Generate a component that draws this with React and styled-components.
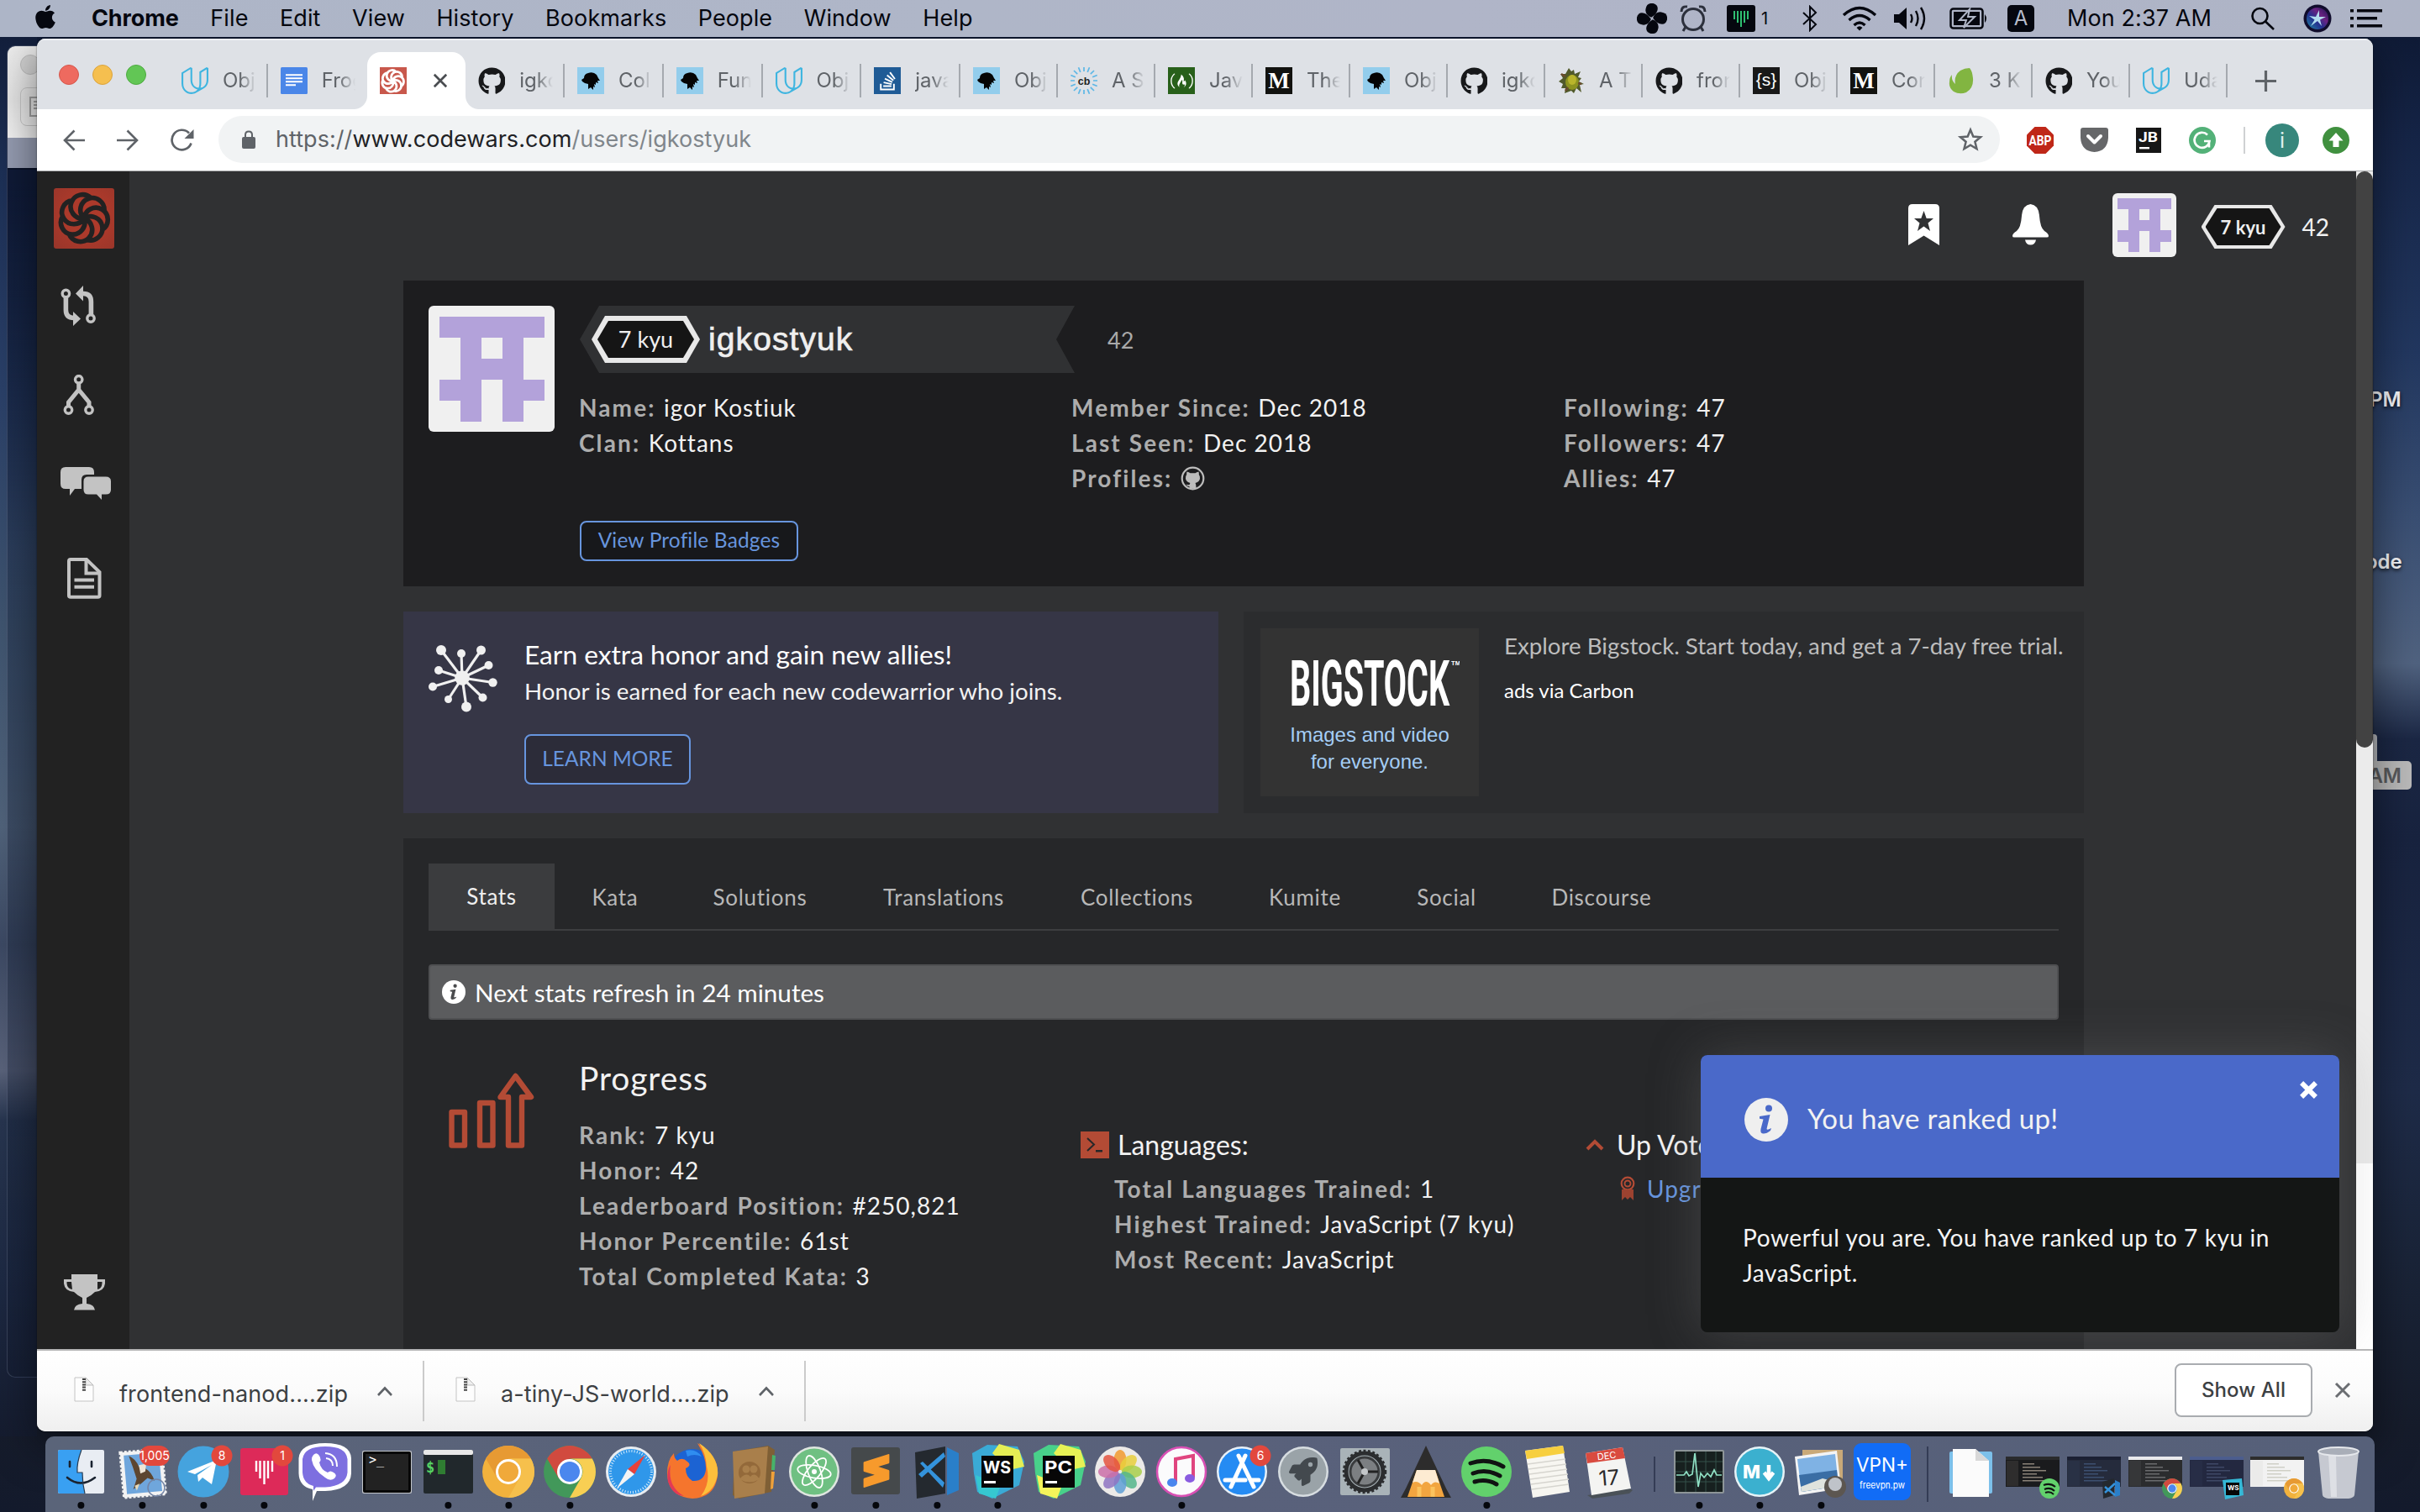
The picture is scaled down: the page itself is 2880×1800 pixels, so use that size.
import React from 'react';
import styled, { createGlobalStyle, css } from 'styled-components';
import { FaApple, FaGithub, FaStackOverflow, FaFreeCodeCamp, FaRocket } from 'react-icons/fa';
import { SiUdacity, SiSublimetext } from 'react-icons/si';

const UI = `Inter, Roboto, "Liberation Sans", sans-serif`;
const LATO = `Lato, "Open Sans", sans-serif`;

const Global = createGlobalStyle`
  * { box-sizing: border-box; }
  html, body { margin: 0; padding: 0; background: #121b31; }
  svg { display: block; flex: none; }
`;

/* ---------- desktop ---------- */
const Desktop = styled.div`
  position: relative;
  width: 2880px;
  height: 1800px;
  overflow: hidden;
  display: flex;
  flex-direction: column;
  font-family: ${UI};
  background:
    linear-gradient(180deg, #0d1730 0, #152446 160px, #22375f 420px, #3a4f73 620px, #50627f 790px,
      #1b2744 880px, #18233f 1000px, #1e2b48 1300px, #1a2438 1500px, #161c2b 1700px, #131a2c 1800px);
`;
const LeftScene = styled.div`
  position: absolute;
  left: 0;
  top: 44px;
  width: 44px;
  height: 1666px;
  background: linear-gradient(180deg, #131f3c 0, #1c2f55 160px, #2a4068 420px, #3f546f 700px,
    #50627a 940px, #3c4963 1080px, #59627a 1230px, #27354f 1290px, #1d2943 1480px, #151c2f 1666px);
`;
const BackWindow = styled.div`
  position: absolute;
  left: 8px;
  top: 54px;
  width: 60px;
  height: 1586px;
  border-radius: 10px;
  border: 1px solid rgba(150, 165, 190, 0.25);
  overflow: hidden;
  background: linear-gradient(180deg, #0f1a36 0, #0f1a36 160px, rgba(18, 30, 56, 0.35) 600px, rgba(18, 26, 46, 0.3) 1586px);
`;
const BackTitle = styled.div`
  height: 109px;
  padding: 10px 0 0 15px;
  background: linear-gradient(180deg, #ececec, #e4e4e4 60%, #f2f2f2);
`;
const BackDot = styled.div`
  width: 24px;
  height: 24px;
  border-radius: 50%;
  background: #d2d2d2;
  border: 1px solid #bdbdbd;
`;
const BackButton = styled.div`
  width: 60px;
  height: 46px;
  margin-top: 15px;
  border: 1px solid #c6c6c6;
  border-radius: 8px;
  padding: 10px;
`;
const BackPane = styled.div`
  height: 38px;
  background: #949bb0;
  border-bottom: 2px solid #0a1228;
`;
const DesktopLabel = styled.span`
  position: absolute;
  left: ${p => p.$x}px;
  top: ${p => p.$y}px;
  font: 600 24px/30px ${UI};
  color: #f1f3f6;
  text-shadow: 0 2px 4px rgba(0, 0, 0, 0.8);
`;
const SelectedLabel = styled.span`
  position: absolute;
  left: 2790px;
  top: 906px;
  width: 80px;
  height: 34px;
  padding-right: 12px;
  border-radius: 5px;
  background: #b9b9b9;
  text-align: right;
  font: 600 24px/36px ${UI};
  color: #58595c;
`;
const FolderStub = styled.div`
  position: absolute;
  left: 2790px;
  top: 874px;
  width: 39px;
  height: 40px;
  border-radius: 4px;
  background: #b2b4b8;
`;

/* ---------- menu bar ---------- */
const MenuBar = styled.header`
  position: relative;
  display: flex;
  align-items: center;
  height: 44px;
  flex: none;
  padding: 0 45px 0 38px;
  background: linear-gradient(90deg, #adb5c7, #afb6c8 40%, #b0b5c8 60%, #aeb4c6);
  color: #05070f;
`;
const AppleMark = styled.div`
  margin-top: -4px;
`;
const MenuList = styled.nav`
  display: flex;
  gap: 37.5px;
  margin-left: 39px;
  flex: 1;
  font-size: 27px;
  line-height: 44px;
`;
const MenuItem = styled.span`
  font-weight: ${p => (p.$bold ? 700 : 400)};
  letter-spacing: ${p => (p.$bold ? '-0.1px' : '0.1px')};
`;
const Tray = styled.div`
  display: flex;
  align-items: center;
  height: 44px;
`;
const TrayItem = styled.div`
  width: ${p => p.$w}px;
  margin-left: ${p => p.$gap || 0}px;
  display: flex;
  align-items: center;
  justify-content: center;
  white-space: nowrap;
`;
const Clock = styled.span`
  font: 400 27px/44px ${UI};
  letter-spacing: 0.1px;
`;
const SmallCount = styled.span`
  font: 400 20px/44px ${UI};
`;
const InputSource = styled.div`
  width: 32px;
  height: 32px;
  border-radius: 5px;
  background: #05070f;
  color: #b7bccb;
  text-align: center;
  font: 400 24px/32px ${UI};
`;

/* ---------- browser window ---------- */
const Window = styled.section`
  position: relative;
  width: 2780px;
  height: 1658px;
  margin: 2px 0 0 44px;
  flex: none;
  display: flex;
  flex-direction: column;
  border-radius: 10px;
  overflow: hidden;
  background: #fff;
`;
const WindowShadow = styled.div`
  position: absolute;
  left: 44px;
  top: 46px;
  width: 2780px;
  height: 1658px;
  border-radius: 10px;
  box-shadow: 0 16px 50px rgba(0, 0, 0, 0.5), 0 0 2px rgba(0, 0, 0, 0.6);
`;
const TabStrip = styled.div`
  display: flex;
  align-items: flex-end;
  height: 84px;
  flex: none;
  background: #dee1e6;
  border-top: 2px solid #eceef2;
`;
const Lights = styled.div`
  display: flex;
  gap: 16px;
  width: 157px;
  height: 82px;
  padding: 29px 0 0 26px;
`;
const Light = styled.i`
  width: 24px;
  height: 24px;
  border-radius: 50%;
  background: ${p => p.$c};
  border: 1px solid ${p => p.$b};
`;
const Tab = styled.div`
  position: relative;
  display: flex;
  align-items: center;
  width: ${p => p.$w}px;
  height: 68px;
  padding-left: 15px;
  flex: none;
  ${p => p.$active && css`
    background: #fff;
    border-radius: 16px 16px 0 0;
    &::before, &::after {
      content: '';
      position: absolute;
      bottom: 0;
      width: 16px;
      height: 16px;
    }
    &::before {
      left: -16px;
      background: radial-gradient(circle at 0 0, transparent 15.5px, #fff 16.5px);
    }
    &::after {
      right: -16px;
      background: radial-gradient(circle at 100% 0, transparent 15.5px, #fff 16.5px);
    }
  `}
`;
const TabLabel = styled.span`
  width: 40px;
  margin-left: 17px;
  overflow: hidden;
  white-space: nowrap;
  font: 400 24px/32px ${UI};
  color: #5f6368;
  mask-image: linear-gradient(90deg, #000 50%, transparent 100%);
`;
const TabRule = styled.i`
  width: 2px;
  height: 40px;
  margin-left: auto;
  background: #a5a9af;
`;
const CloseMark = styled.div`
  margin-left: 31px;
`;
const NewTab = styled.div`
  margin: 0 0 21px 33px;
`;
const Favicon = styled.div`
  width: 32px;
  height: 32px;
  flex: none;
  display: flex;
  align-items: center;
  justify-content: center;
  overflow: hidden;
  background: ${p => p.$bg || 'transparent'};
  color: ${p => p.$fg || '#fff'};
`;
const Toolbar = styled.div`
  display: flex;
  align-items: center;
  height: 74px;
  flex: none;
  padding: 0 28px 0 31px;
  background: #fff;
  border-bottom: 1px solid #a9aaac;
`;
const ToolIcon = styled.div`
  width: ${p => p.$w}px;
  margin-left: ${p => p.$gap || 0}px;
  display: flex;
  justify-content: center;
`;
const Omnibox = styled.div`
  display: flex;
  align-items: center;
  width: 2122px;
  height: 56px;
  margin: -2px 0 0 30px;
  padding: 0 19px 0 28px;
  border-radius: 28px;
  background: #f1f3f4;
`;
const Url = styled.div`
  flex: 1;
  margin-left: 24px;
  font: 400 27px/58px ${UI};
  letter-spacing: 0.05px;
  color: #80868b;
  em { font-style: normal; color: #5f6368; }
  b { font-weight: 400; color: #202124; }
`;
const ToolRule = styled.i`
  width: 2px;
  height: 32px;
  margin-left: 33px;
  background: #cfd1d3;
`;
const Avatar = styled.div`
  width: 40px;
  height: 40px;
  margin-left: 24px;
  border-radius: 50%;
  background: #37877c;
  color: #dff0ee;
  text-align: center;
  font: 400 25px/40px ${UI};
`;

/* ---------- page ---------- */
const Page = styled.div`
  position: relative;
  display: flex;
  height: 1402px;
  flex: none;
  overflow: hidden;
  background: #303133;
  font-family: ${LATO};
  color: #f2f2f2;
`;
const SideNav = styled.aside`
  width: 110px;
  flex: none;
  display: flex;
  flex-direction: column;
  padding: 20px 0 48px 20px;
  background: #222222;
  color: #c3c3c3;
`;
const Logo = styled.div`
  width: 72px;
  height: 72px;
  border-radius: 3px;
  background: radial-gradient(circle at 55% 45%, #ad3a2b 40%, #98352a 100%);
  color: #222222;
`;
const NavIcon = styled.div`
  margin: ${p => p.$top}px 0 0 ${p => p.$left}px;
`;
const Main = styled.main`
  width: 2650px;
  flex: none;
`;
const PageHeader = styled.div`
  display: flex;
  justify-content: flex-end;
  height: 130px;
  padding-right: 32px;
`;
const HeaderItem = styled.div`
  margin: ${p => p.$top}px 0 0 ${p => p.$gap || 0}px;
`;
const HonorText = styled.span`
  display: block;
  font-size: 28px;
  line-height: 42px;
`;
const Identicon = styled.div`
  width: ${p => p.$size}px;
  height: ${p => p.$size}px;
  flex: none;
  display: grid;
  grid-template-columns: repeat(5, 1fr);
  grid-template-rows: repeat(5, 1fr);
  padding: ${p => p.$size / 12}px;
  border-radius: 6px;
  background: #f0f0f0;
`;
const Pixel = styled.i`
  margin: ${p => (p.$on ? '0 -0.5px -0.5px 0' : '0')};
  background: ${p => (p.$on ? '#b3a2da' : 'transparent')};
`;
const RankOuter = styled.div`
  width: ${p => p.$w}px;
  height: ${p => p.$h}px;
  padding: ${p => p.$b}px ${p => p.$b + 1}px;
  background: #e8e8e8;
  clip-path: polygon(${p => p.$s}px 0, calc(100% - ${p => p.$s}px) 0, 100% 50%, calc(100% - ${p => p.$s}px) 100%, ${p => p.$s}px 100%, 0 50%);
`;
const RankInner = styled.div`
  height: 100%;
  display: flex;
  align-items: center;
  justify-content: center;
  background: #151515;
  color: #efefef;
  font: ${p => (p.$bold ? 700 : 400)} ${p => p.$fs}px/1.5 ${LATO};
  clip-path: polygon(${p => p.$s}px 0, calc(100% - ${p => p.$s}px) 0, 100% 50%, calc(100% - ${p => p.$s}px) 100%, ${p => p.$s}px 100%, 0 50%);
`;
const Column = styled.div`
  width: 2000px;
  margin-left: 326px;
  display: flex;
  flex-direction: column;
  gap: 30px;
`;
const ProfileCard = styled.section`
  display: flex;
  gap: 30px;
  height: 364px;
  padding: 30px;
  background: #1d1d1f;
`;
const ProfileBody = styled.div`
  flex: 1;
`;
const NameRow = styled.div`
  display: flex;
  align-items: center;
  height: 80px;
  width: 700px;
`;
const Ribbon = styled.div`
  display: flex;
  align-items: center;
  width: 589px;
  height: 80px;
  padding-left: 14px;
  background: #303133;
  clip-path: polygon(0 50%, 23px 0, 100% 0, calc(100% - 22px) 50%, 100% 100%, 23px 100%);
`;
const UserName = styled.span`
  margin-left: 10px;
  font: 400 39px/80px "Liberation Sans", Arial, sans-serif;
  letter-spacing: 1.1px;
  -webkit-text-stroke: 0.7px #efefef;
  color: #efefef;
`;
const Score = styled.span`
  margin-left: 39px;
  font-size: 27px;
  color: #a9a9a9;
`;
const InfoGrid = styled.div`
  display: grid;
  grid-template-columns: repeat(3, 586px);
  height: 126px;
  margin: 20px 0 0 -1px;
`;
const Fact = styled.div`
  display: flex;
  align-items: center;
  height: 42px;
  font-size: 28px;
  line-height: 42px;
  white-space: nowrap;
  letter-spacing: 1px;
`;
const FactLabel = styled.b`
  margin-right: 9.5px;
  font-weight: 700;
  letter-spacing: 2.1px;
  color: #adadad;
`;
const OutlineButton = styled.button`
  display: block;
  width: ${p => p.$w}px;
  height: ${p => p.$h}px;
  margin: ${p => p.$top}px 0 0;
  padding: 0 0 2px;
  border: 2px solid #6795de;
  border-radius: 8px;
  background: ${p => p.$bg};
  color: #6795de;
  font: 400 ${p => p.$fs}px/1 ${LATO};
  letter-spacing: ${p => p.$ls}px;
  white-space: nowrap;
`;
const PromoRow = styled.div`
  display: flex;
  gap: 30px;
  height: 240px;
`;
const Promo = styled.section`
  display: flex;
  width: 970px;
  flex: none;
  padding: 32px 30px;
  background: #363646;
`;
const PromoIcon = styled.div`
  margin-top: 8px;
`;
const PromoText = styled.div`
  margin-left: 31px;
  white-space: nowrap;
`;
const PromoTitle = styled.div`
  margin-top: -2px;
  font-size: 31.7px;
  line-height: 42px;
  color: #fff;
`;
const PromoSub = styled.div`
  margin-top: 2px;
  font-size: 27.7px;
  line-height: 42px;
`;
const AdCard = styled.section`
  display: flex;
  flex: 1;
  min-width: 0;
  padding: 20px;
  gap: 30px;
  background: #2b2c2e;
`;
const AdImage = styled.div`
  width: 260px;
  height: 200px;
  flex: none;
  display: flex;
  flex-direction: column;
  align-items: center;
  padding-top: 36px;
  background: #333333;
  color: #a4cdf5;
  text-align: center;
  font: 400 24px/32px "Liberation Sans", Arial, sans-serif;
`;
const AdTagline = styled.div`
  margin-top: 15px;
  white-space: nowrap;
`;
const AdCopy = styled.div`
  white-space: nowrap;
  font-size: 27.7px;
  line-height: 42px;
  color: #bdbdbd;
`;
const AdVia = styled.div`
  margin-top: 11px;
  font-size: 24px;
  line-height: 42px;
  color: #fff;
`;
const StatsCard = styled.section`
  height: 640px;
  padding: 30px;
  background: #262729;
`;
const TabsRow = styled.div`
  display: flex;
  height: 80px;
  border-bottom: 2px solid #3d3e40;
`;
const PageTab = styled.div`
  height: ${p => (p.$active ? 80 : 78)}px;
  padding: ${p => (p.$active ? 0 : 1)}px 0 0;
  width: ${p => p.$w}px;
  text-align: center;
  font-size: 26px;
  line-height: 78px;
  letter-spacing: 0.7px;
  background: ${p => (p.$active ? '#3b3c3e' : 'transparent')};
  color: ${p => (p.$active ? '#efefef' : '#b8b8b8')};
`;
const Notice = styled.div`
  display: flex;
  align-items: center;
  height: 66px;
  margin-top: 40px;
  padding-left: 14px;
  border: 2px solid #4f5052;
  border-radius: 4px;
  background: #5b5c5e;
  color: #fff;
  font-size: 29.7px;
`;
const NoticeText = styled.span`
  margin-left: 11px;
`;
const StatsBody = styled.div`
  display: flex;
  padding-top: 34px;
`;
const StatsIcon = styled.div`
  width: 179px;
  padding: 28px 0 0 24px;
`;
const StatsTitle = styled.h2`
  height: 70px;
  margin: 0 0 12px;
  font-weight: 400;
  font-size: 39px;
  line-height: 70px;
  letter-spacing: 0.9px;
`;
const StatsColumn = styled.div`
  width: ${p => p.$w}px;
  padding-top: ${p => p.$top || 0}px;
`;
const SubHead = styled.div`
  display: flex;
  align-items: center;
  height: 50px;
  margin-left: ${p => p.$left}px;
  font-size: 32px;
  line-height: 50px;
  white-space: nowrap;
`;
const SubHeadText = styled.span`
  margin-left: ${p => p.$gap}px;
`;
const Indented = styled.div`
  margin: 6px 0 0 51px;
`;
const LinkText = styled.span`
  margin-left: 14px;
  color: #6795de;
`;
const ScrollTrack = styled.div`
  width: 20px;
  flex: none;
  background: linear-gradient(180deg, #ebebeb 1181px, #ffffff 1181px);
`;
const ScrollThumb = styled.div`
  width: 20px;
  height: 686px;
  border-radius: 10px;
  background: #424242;
  border-right: 1px solid #383838;
`;
const Toast = styled.div`
  position: absolute;
  left: 1980px;
  top: 1052px;
  width: 760px;
  height: 330px;
  border-radius: 8px;
  overflow: hidden;
  background: #141615;
`;
const ToastGlow = styled.div`
  position: absolute;
  left: 1980px;
  top: 1052px;
  width: 760px;
  height: 330px;
  border-radius: 8px;
  box-shadow: 0 0 60px rgba(120, 120, 120, 0.34);
`;
const ToastHead = styled.div`
  display: flex;
  height: 146px;
  padding: 0 26px 0 52px;
  background: #4a69c9;
`;
const ToastTitle = styled.div`
  flex: 1;
  margin: 50px 0 0 23px;
  font-size: 33px;
  line-height: 50px;
  letter-spacing: 0.35px;
`;
const ToastBadge = styled.div`
  margin-top: 51px;
`;
const ToastClose = styled.div`
  margin-top: 31px;
`;
const ToastBody = styled.div`
  padding: 50px 40px 0 50px;
  font-size: 28px;
  line-height: 42px;
  letter-spacing: 0.6px;
  color: #f5f5f5;
`;

/* ---------- downloads ---------- */
const Downloads = styled.footer`
  display: flex;
  align-items: center;
  height: 98px;
  padding: 0 26px 0 0;
  border-top: 2px solid #b5b5b6;
  background: linear-gradient(180deg, #ffffff, #fbfbfb 50%, #efefef);
  color: #3c4043;
`;
const Download = styled.div`
  display: flex;
  align-items: center;
  width: ${p => p.$w}px;
  height: 72px;
  padding: 0 36px 0 ${p => p.$pl}px;
  border-right: 2px solid #cbcbcb;
  svg:first-child { margin-top: -4px; }
`;
const FileName = styled.span`
  flex: 1;
  margin: 7px 0 0 30px;
  white-space: nowrap;
  font: 400 27px/36px ${UI};
  letter-spacing: 0.1px;
`;
const ShowAll = styled.button`
  width: 164px;
  height: 64px;
  margin: -3px 26px 0 auto;
  padding: 0;
  border: 2px solid #a9acb0;
  border-radius: 8px;
  background: #fff;
  color: #3c4043;
  font: 500 24px/1 ${UI};
  letter-spacing: 0.1px;
`;
const ShelfClose = styled.div`
  margin-top: -3px;
`;

/* ---------- dock ---------- */
const DockBar = styled.div`
  position: relative;
  display: flex;
  width: 2772px;
  height: 90px;
  margin: 6px 0 0 54px;
  padding-left: 6px;
  flex: none;
  border-radius: 10px 10px 0 0;
  background: linear-gradient(90deg, #5a6479, #59617b 50%, #566079);
`;
const DockCell = styled.div`
  width: 72.75px;
  height: 90px;
  flex: none;
`;
const DockRule = styled.i`
  width: 2px;
  height: ${p => p.$h}px;
  margin: ${p => p.$top}px 16px 0;
  background: #343c55;
`;

/* ---------- drawings ---------- */
const pattern = ['11111', '01010', '01110', '11011', '01010'];
function Ident({ size }) {
  return (
    <Identicon $size={size}>
      {pattern.join('').split('').map((c, i) => <Pixel key={i} $on={c === '1'} />)}
    </Identicon>
  );
}
function Rank({ large }) {
  return large ? (
    <RankOuter $w={129} $h={56} $b={6} $s={16}>
      <RankInner $s={13} $fs={27}>7 kyu</RankInner>
    </RankOuter>
  ) : (
    <RankOuter $w={100} $h={52} $b={4} $s={16}>
      <RankInner $s={14} $fs={22} $bold>7 kyu</RankInner>
    </RankOuter>
  );
}

/* seven arcs leave the centre, swing clockwise and close on the neighbouring arc */
const Swirl = ({ size, width, r = 14.2 }) => {
  const step = (Math.PI * 2) / 7;
  const arms = Array.from({ length: 7 }, (_, k) => {
    const a = 0.1 + k * step;
    const reach = 2 * r * Math.cos(step / 2);
    const x = 36 + reach * Math.cos(a + step / 2);
    const y = 36 + reach * Math.sin(a + step / 2);
    return `M36 36A${r} ${r} 0 1 1 ${x.toFixed(2)} ${y.toFixed(2)}`;
  });
  return (
    <svg width={size} height={size} viewBox="0 0 72 72" fill="none" stroke="currentColor" strokeWidth={width}>
      <path d={arms.join('')} />
    </svg>
  );
};
const Bird = () => (
  <svg width="32" height="32" viewBox="0 0 32 32">
    <path d="M5 15 L8 13 Q8 8 13 7 Q19 5 23 9 L25 13 L27 16 L24 16 L25 19 L22 18 L22 21 L20 20 L21 24 L19 23 L19 27 L16 24 L13 26 L13 20 L9 19 L6 17 Z" fill="#050505" />
  </svg>
);
const Burst = () => (
  <svg width="32" height="32" viewBox="0 0 32 32" stroke="#5db7e6" strokeWidth="1.7">
    {Array.from({ length: 16 }, (_, i) => (
      <line key={i} x1="16" y1="-1" x2="16" y2="5" transform={`rotate(${i * 22.5} 16 16)`} />
    ))}
    <text x="16" y="20.5" textAnchor="middle" fontFamily="Liberation Sans" fontWeight="700" fontSize="12.5" fill="#222" stroke="none">cb</text>
  </svg>
);
const Turtle = () => (
  <svg width="32" height="32" viewBox="0 0 32 32">
    <path d="M13 1 L16 5 L19 3 L20 8 L27 5 L24 12 L28 13 L25 17 L31 20 L26 21 L28 30 L22 25 L19 31 L16 28 L8 31 L9 25 L4 25 L6 20 L1 17 L6 13 L3 8 L9 8 Z" fill="#515a2a" />
    <ellipse cx="17" cy="18" rx="8" ry="9" fill="#8d931f" />
    <ellipse cx="17" cy="15" rx="5" ry="6" fill="#b9b52b" />
    <path d="M4 8L9 11M28 20L24 19M9 28L12 24" stroke="#6d4b2e" strokeWidth="2.5" />
  </svg>
);
const Leaf = () => (
  <svg width="32" height="32" viewBox="0 0 32 32">
    <path d="M26 1 Q29 4 30 13 Q31 25 22 30 Q14 33 7 29 Q1 24 2 18 Q2 12 5 9 Q4 16 9 20 Q7 10 15 4 Q20 1 26 1Z" fill="#82b541" />
  </svg>
);
const Docs = () => (
  <svg width="32" height="32" viewBox="0 0 32 32">
    <rect width="32" height="32" rx="1.5" fill="#4a86e8" />
    <path d="M6 9.2H26M6 13.2H26M6 17.2H26M6 21.2H18" stroke="#fff" strokeWidth="2" />
  </svg>
);
const Lettermark = ({ ch, family, size, weight = 700, y = 24 }) => (
  <svg width="32" height="32" viewBox="0 0 32 32">
    <text x="16" y={y} textAnchor="middle" fontFamily={family} fontWeight={weight} fontSize={size} fill="#fff">{ch}</text>
  </svg>
);
const icons = {
  udacity: <Favicon $fg="#3fb5e0"><SiUdacity size={32} /></Favicon>,
  docs: <Favicon><Docs /></Favicon>,
  codewars: <Favicon $bg="#c8584c"><Swirl size={33} width={6} /></Favicon>,
  github: <Favicon $fg="#17181a"><FaGithub size={33} /></Favicon>,
  bird: <Favicon $bg="#93cdec"><Bird /></Favicon>,
  stack: <Favicon $bg="#1f5b96"><FaStackOverflow size={25} /></Favicon>,
  burst: <Favicon><Burst /></Favicon>,
  fcc: <Favicon $bg="#28601a"><FaFreeCodeCamp size={27} /></Favicon>,
  medium: <Favicon $bg="#12120f"><Lettermark ch="M" family="Liberation Serif" size="27" y={25} /></Favicon>,
  turtle: <Favicon><Turtle /></Favicon>,
  scss: <Favicon $bg="#191919"><Lettermark ch="{s}" family="Liberation Sans" size="21" weight={400} y={22} /></Favicon>,
  leaf: <Favicon><Leaf /></Favicon>,
};
const tabs = [
  ['udacity', 'Obj', 117.75, true], ['docs', 'Frog', 117.75, false], ['codewars', null, 117.75, false],
  ['github', 'igko', 117.75, true], ['bird', 'Col', 117.75, true], ['bird', 'Fun', 117.75, true],
  ['udacity', 'Obj', 117.75, true], ['stack', 'java', 117.75, true],
  ['bird', 'Obj', 116, true], ['burst', 'A S', 116, true], ['fcc', 'Jav', 116, true],
  ['medium', 'The', 116, true], ['bird', 'Obj', 116, true], ['github', 'igko', 116, true],
  ['turtle', 'A T', 116, true], ['github', 'fron', 116, true], ['scss', 'Obj', 116, true],
  ['medium', 'Con', 116, true], ['leaf', '3 K', 116, true], ['github', 'You', 116, true],
  ['udacity', 'Uda', 116, true],
];

const InfoGlyph = ({ size, bg, fg }) => (
  <svg width={size} height={size} viewBox="0 0 52 52">
    <circle cx="26" cy="26" r="26" fill={bg} />
    <ellipse cx="29" cy="12.5" rx="4" ry="4" fill={fg} />
    <path d="M18 22 L30.5 20 L26.5 37 Q27 39 32 36 L31 39 Q26 43 22 42.5 Q18.500 42 19.500 37 L22.500 25.500 L18 24.800 Z" fill={fg} />
  </svg>
);
const Cross = ({ size, w, color }) => (
  <svg width={size} height={size} viewBox="0 0 20 20">
    <path d="M2 2L18 18M18 2L2 18" stroke={color} strokeWidth={w} strokeLinecap="butt" />
  </svg>
);

function MenuTray() {
  return (
    <Tray>
      <TrayItem $w={36}>
        <svg width="36" height="36" viewBox="0 0 36 36" fill="#05070f">
          {[0, 90, 180, 270].map(a => (
            <path key={a} d="M17 17 Q9 15 9 8 Q9 0 17 0 Q24 1 23 8 Q22 13 17 17Z" transform={`rotate(${a + 8} 18 18)`} />
          ))}
        </svg>
      </TrayItem>
      <TrayItem $w={32} $gap={15}>
        <svg width="32" height="34" viewBox="0 0 32 34" fill="none" stroke="#2c303c" strokeWidth="3">
          <circle cx="16" cy="18" r="12.5" />
          <path d="M2 9Q2 2 9 3M30 9Q30 2 23 3M7 27L4 32M25 27L28 32" />
        </svg>
      </TrayItem>
      <TrayItem $w={34} $gap={24}>
        <svg width="34" height="32" viewBox="0 0 34 32">
          <rect width="34" height="32" rx="3" fill="#05070f" />
          <path d="M9 7V17M13 7V21M17 7V26M21 7V21M25 7V17" stroke="#2fbf71" strokeWidth="2" />
        </svg>
      </TrayItem>
      <TrayItem $w={8} $gap={7}><SmallCount>1</SmallCount></TrayItem>
      <TrayItem $w={18} $gap={41}>
        <svg width="20" height="32" viewBox="0 0 20 32" fill="none" stroke="#05070f" strokeWidth="2">
          <path d="M2 9L17 23L10 30V2L17 9L2 23" />
        </svg>
      </TrayItem>
      <TrayItem $w={41} $gap={29}>
        <svg width="42" height="30" viewBox="0 0 42 30" fill="none" stroke="#05070f" strokeWidth="3.4">
          <path d="M2 11Q21 -6 40 11M8.500 17Q21 6 33.500 17M14.500 23Q21 17 27.500 23" />
          <path d="M17.500 26Q21 22.500 24.500 26L21 29.500Z" fill="#05070f" stroke="none" />
        </svg>
      </TrayItem>
      <TrayItem $w={42} $gap={20}>
        <svg width="42" height="32" viewBox="0 0 42 32" fill="none" stroke="#05070f" strokeWidth="2.4">
          <path d="M1 11H7L16 3V29L7 21H1Z" fill="#05070f" stroke="none" />
          <path d="M21 11Q24 16 21 21M27 7Q32 16 27 25M33 3Q41 16 33 29" />
        </svg>
      </TrayItem>
      <TrayItem $w={45} $gap={25}>
        <svg width="46" height="26" viewBox="0 0 46 26">
          <rect x="1.500" y="1.500" width="38" height="23" rx="3" fill="none" stroke="#05070f" strokeWidth="2.500" />
          <rect x="5" y="5" width="31" height="16" fill="#05070f" />
          <path d="M24 2L12 15H20L17 24L30 11H22Z" fill="#05070f" stroke="#b0b6c7" strokeWidth="2" />
          <path d="M42 8Q46 13 42 18Z" fill="#05070f" />
        </svg>
      </TrayItem>
      <TrayItem $w={32} $gap={24}><InputSource>A</InputSource></TrayItem>
      <TrayItem $w={170} $gap={40}><Clock>Mon 2:37 AM</Clock></TrayItem>
      <TrayItem $w={30} $gap={47}>
        <svg width="30" height="28" viewBox="0 0 30 28" fill="none" stroke="#05070f" strokeWidth="2.600">
          <circle cx="11.500" cy="11" r="9" /><path d="M18 17.500L28 27" />
        </svg>
      </TrayItem>
      <TrayItem $w={34} $gap={33}>
        <svg width="34" height="34" viewBox="0 0 34 34">
          <defs>
            <linearGradient id="siri" x1="1" y1="0" x2="0" y2="1">
              <stop offset="0" stopColor="#1b1560" /><stop offset="0.350" stopColor="#8a2b9e" />
              <stop offset="0.600" stopColor="#2a3bb0" /><stop offset="1" stopColor="#22b5c9" />
            </linearGradient>
          </defs>
          <circle cx="17" cy="17" r="16.500" fill="#100c2c" />
          <circle cx="17" cy="17" r="13" fill="url(#siri)" opacity="0.750" />
          <path d="M19 7L19 15L27 15L20 18.500L22 26L17 20L9 26L13.500 18.500L7 14L15 15Z" fill="#bfeefa" opacity="0.900" />
        </svg>
      </TrayItem>
      <TrayItem $w={38} $gap={22}>
        <svg width="38" height="22" viewBox="0 0 38 22" fill="#05070f">
          <path d="M0 0H4V3.600H0ZM8 0H38V3.600H8ZM0 9H4V12.600H0ZM8 9H32V12.600H8ZM0 18H4V21.600H0ZM8 18H38V21.600H8Z" />
        </svg>
      </TrayItem>
    </Tray>
  );
}

function BrowserToolbar() {
  return (
    <Toolbar>
      <ToolIcon $w={26}>
        <svg width="26" height="26" viewBox="0 0 26 26" fill="none" stroke="#5f6368" strokeWidth="2.600">
          <path d="M26 13H2M13.500 1.500L2 13L13.500 24.500" />
        </svg>
      </ToolIcon>
      <ToolIcon $w={26} $gap={38}>
        <svg width="26" height="26" viewBox="0 0 26 26" fill="none" stroke="#5f6368" strokeWidth="2.600">
          <path d="M0 13H24M12.500 1.500L24 13L12.500 24.500" />
        </svg>
      </ToolIcon>
      <ToolIcon $w={27} $gap={38}>
        <svg width="28" height="28" viewBox="0 0 28 28">
          <path d="M24.500 17.500A11.800 11.800 0 1 1 22 5.500" fill="none" stroke="#5f6368" strokeWidth="2.700" />
          <path d="M27.500 1V12H16.500Z" fill="#5f6368" />
        </svg>
      </ToolIcon>
      <Omnibox>
        <svg width="16" height="22" viewBox="0 0 16 22">
          <rect y="8" width="16" height="14" rx="2" fill="#5f6368" />
          <path d="M4 9V5.500Q4 1.500 8 1.500Q12 1.500 12 5.500V9" fill="none" stroke="#5f6368" strokeWidth="2" />
        </svg>
        <Url><em>https://</em><b>www.codewars.com</b>/users/igkostyuk</Url>
        <svg width="32" height="30" viewBox="0 0 32 30" fill="none" stroke="#5f6368" strokeWidth="2.500">
          <path d="M16 3.500L19.300 11.500L28 12.200L21.400 17.800L23.500 26.200L16 21.700L8.500 26.200L10.600 17.800L4 12.200L12.700 11.500Z" />
        </svg>
      </Omnibox>
      <ToolIcon $w={32} $gap={32}>
        <svg width="32" height="32" viewBox="0 0 32 32">
          <path d="M9.500 0H22.500L32 9.500V22.500L22.500 32H9.500L0 22.500V9.500Z" fill="#bf2718" />
          <text x="2.500" y="22" fontFamily="Roboto" fontWeight="700" fontSize="16.500" textLength="27" lengthAdjust="spacingAndGlyphs" fill="#fff">ABP</text>
        </svg>
      </ToolIcon>
      <ToolIcon $w={33} $gap={32}>
        <svg width="33" height="29" viewBox="0 0 33 29">
          <path d="M3 0H30Q33 0 33 3V12Q32 28 16.500 29Q1 28 0 12V3Q0 0 3 0Z" fill="#666769" />
          <path d="M9 10L16.500 17.500L24 10" fill="none" stroke="#fff" strokeWidth="4" strokeLinecap="round" strokeLinejoin="round" />
        </svg>
      </ToolIcon>
      <ToolIcon $w={30} $gap={33}>
        <svg width="30" height="30" viewBox="0 0 30 30">
          <rect width="30" height="30" fill="#161616" />
          <text x="3" y="17" fontFamily="Roboto" fontWeight="700" fontSize="17" textLength="23" lengthAdjust="spacingAndGlyphs" fill="#fff">JB</text>
          <rect x="4" y="23" width="12" height="2.400" fill="#fff" />
        </svg>
      </ToolIcon>
      <ToolIcon $w={32} $gap={33}>
        <svg width="32" height="32" viewBox="0 0 32 32">
          <circle cx="16" cy="16" r="16" fill="#53b178" />
          <path d="M22 9.500A9 9 0 1 0 24.500 17H18M24 16V24.500" fill="none" stroke="#fff" strokeWidth="2.600" />
        </svg>
      </ToolIcon>
      <ToolRule />
      <Avatar>i</Avatar>
      <ToolIcon $w={32} $gap={28}>
        <svg width="32" height="32" viewBox="0 0 32 32">
          <circle cx="16" cy="16" r="16" fill="#40903f" />
          <path d="M16 7L24.500 16.500H19.500V24H12.500V16.500H7.500Z" fill="#fff" />
        </svg>
      </ToolIcon>
    </Toolbar>
  );
}

function Sidebar() {
  return (
    <SideNav>
      <Logo><Swirl size={72} width={5.6} /></Logo>
      <NavIcon $top={44} $left={8}>
        <svg width="42" height="48" viewBox="0 0 42 48" fill="none" stroke="currentColor" strokeWidth="3.400">
          <circle cx="6.400" cy="9.500" r="4.200" /><circle cx="36" cy="39" r="4.200" />
          <path d="M6.400 14V29Q6.400 38.500 16 38.500M36.400 34V19Q36.400 9.500 27 9.500" strokeWidth="5.600" />
          <path d="M15 31L24 39.500L15 48ZM27 0L18 9.500L27 18.500Z" fill="currentColor" stroke="none" />
        </svg>
      </NavIcon>
      <NavIcon $top={58} $left={11}>
        <svg width="38" height="48" viewBox="0 0 38 48" fill="none" stroke="currentColor" strokeWidth="3.400">
          <circle cx="18.700" cy="5.800" r="4.200" /><circle cx="6.500" cy="42" r="4.200" /><circle cx="31" cy="42" r="4.200" />
          <path d="M18.700 10V20M6.500 38V33L18.700 18L31 33V38" strokeWidth="5" />
        </svg>
      </NavIcon>
      <NavIcon $top={62} $left={8}>
        <svg width="61" height="40" viewBox="0 0 61 40" fill="currentColor">
          <path d="M6 0H34Q40 0 40 6V9H31Q25 9 25 15V26H17L11 34V26H6Q0 26 0 20V6Q0 0 6 0Z" />
          <path d="M33 11.500H54Q60 11.500 60 17V27Q60 32.500 54 32.500H49V39L43 32.500H33Q27.500 32.500 27.500 27V17Q27.500 11.500 33 11.500Z" />
        </svg>
      </NavIcon>
      <NavIcon $top={68} $left={16}>
        <svg width="41" height="49" viewBox="0 0 41 49" fill="none" stroke="currentColor" strokeWidth="4">
          <path d="M2 4Q2 2 4 2H23L38.500 17V45Q38.500 46.800 36.500 46.800H4Q2 46.800 2 45Z" />
          <path d="M22.500 2V18.500H38.500M8.500 26.500H32M8.500 34.800H32" />
        </svg>
      </NavIcon>
      <NavIcon $top={804} $left={12}>
        <svg width="49" height="43" viewBox="0 0 49 43" fill="currentColor">
          <path d="M9 0H40V6H49V11Q48 20 37 21Q32 26 27 28V35Q36 35.500 37 42.500H12Q13 35.500 22 35V28Q17 26 12 21Q1 20 0 11V6H9ZM9 9H3.500V11Q4 17 10 18ZM40 9V18Q45 17 45.500 11V9Z" fillRule="evenodd" />
        </svg>
      </NavIcon>
    </SideNav>
  );
}

const Octo = () => (
  <svg width="29" height="29" viewBox="0 0 29 29">
    <circle cx="14.500" cy="14.500" r="12.800" fill="none" stroke="#bdbdbd" strokeWidth="2.200" />
    <path d="M7.500 6.500Q10 7 11.500 8.200H17.500Q19 7 21.500 6.500Q22 8.500 21.800 10Q23.500 12 23 15Q22 19 17.500 20Q18.500 21.500 18.500 26.500H10.500V24Q7.500 24 6.500 21.500Q8.500 22.500 10.800 22Q10.500 21 11.500 20Q7 19 6 15Q5.500 12 7.200 10Q7 8.500 7.500 6.500Z" fill="#bdbdbd" />
  </svg>
);
const Network = () => {
  const pts = [[15, 6, 6], [39, 10, 5], [62.500, 6, 5.500], [71.500, 24, 5], [76.500, 44.500, 5.200], [64.500, 62.500, 5], [45, 73.500, 6], [23.500, 64.500, 4.500], [5, 49.500, 5], [12, 30, 5]];
  return (
    <svg width="83" height="80" viewBox="0 0 83 80" fill="#f0f0f0" stroke="#f0f0f0">
      {pts.map(([x, y, r], i) => (
        <g key={i}>
          <line x1="40" y1="39" x2={x} y2={y} strokeWidth="3.200" />
          <circle cx={x} cy={y} r={r} stroke="none" />
        </g>
      ))}
      <circle cx="40" cy="39" r="8.800" stroke="none" />
    </svg>
  );
};

function Content() {
  return (
    <Main>
      <PageHeader>
        <HeaderItem $top={39}>
          <svg width="37" height="49" viewBox="0 0 37 49">
            <path d="M5 0H32Q37 0 37 5V49L18.500 37.500L0 49V5Q0 0 5 0Z" fill="#fff" />
            <path d="M18.500 8L21.700 17H30L23.500 22.500L26 32L18.500 26.500L11 32L13.500 22.500L7 17H15.300Z" fill="#303133" />
          </svg>
        </HeaderItem>
        <HeaderItem $top={39} $gap={87}>
          <svg width="43" height="49" viewBox="0 0 43 49" fill="#fff">
            <path d="M21.500 0Q31 1 32 14Q33 28 38 32Q43 35 43 38Q43 39.500 41 39.500H2Q0 39.500 0 38Q0 35 5 32Q10 28 11 14Q12 1 21.500 0ZM15 42.500H28Q27 48.500 21.500 48.500Q16 48.500 15 42.500Z" />
          </svg>
        </HeaderItem>
        <HeaderItem $top={26} $gap={76}><Ident size={76} /></HeaderItem>
        <HeaderItem $top={40} $gap={30}><Rank /></HeaderItem>
        <HeaderItem $top={45} $gap={20}><HonorText>42</HonorText></HeaderItem>
      </PageHeader>
      <Column>
        <ProfileCard>
          <Ident size={150} />
          <ProfileBody>
            <NameRow>
              <Ribbon><Rank large /><UserName>igkostyuk</UserName></Ribbon>
              <Score>42</Score>
            </NameRow>
            <InfoGrid>
              <div>
                <Fact><FactLabel>Name:</FactLabel>igor Kostiuk</Fact>
                <Fact><FactLabel>Clan:</FactLabel>Kottans</Fact>
              </div>
              <div>
                <Fact><FactLabel>Member Since:</FactLabel>Dec 2018</Fact>
                <Fact><FactLabel>Last Seen:</FactLabel>Dec 2018</Fact>
                <Fact><FactLabel>Profiles:</FactLabel><Octo /></Fact>
              </div>
              <div>
                <Fact><FactLabel>Following:</FactLabel>47</Fact>
                <Fact><FactLabel>Followers:</FactLabel>47</Fact>
                <Fact><FactLabel>Allies:</FactLabel>47</Fact>
              </div>
            </InfoGrid>
            <OutlineButton $w={260} $h={48} $top={30} $fs={24.5} $ls={0.15} $bg="#17181b">View Profile Badges</OutlineButton>
          </ProfileBody>
        </ProfileCard>
        <PromoRow>
          <Promo>
            <PromoIcon><Network /></PromoIcon>
            <PromoText>
              <PromoTitle>Earn extra honor and gain new allies!</PromoTitle>
              <PromoSub>Honor is earned for each new codewarrior who joins.</PromoSub>
              <OutlineButton $w={198} $h={60} $top={30} $fs={24.5} $ls={0} $bg="#2c2c39">LEARN MORE</OutlineButton>
            </PromoText>
          </Promo>
          <AdCard>
            <AdImage>
              <svg width="214" height="60" viewBox="0 0 214 60" fill="#fff">
                <text x="12" y="56" fontFamily="Roboto" fontWeight="700" fontSize="76" textLength="190" lengthAdjust="spacingAndGlyphs">BIGSTOCK</text>
                <text x="204" y="8" fontFamily="Liberation Sans" fontSize="8" fontWeight="700" textLength="11" lengthAdjust="spacingAndGlyphs">TM</text>
              </svg>
              <AdTagline>Images and video<br />for everyone.</AdTagline>
            </AdImage>
            <div>
              <AdCopy>Explore Bigstock. Start today, and get a 7-day free trial.</AdCopy>
              <AdVia>ads via Carbon</AdVia>
            </div>
          </AdCard>
        </PromoRow>
        <StatsCard>
          <TabsRow>
            <PageTab $active $w={150}>Stats</PageTab>
            <PageTab $w={144}>Kata</PageTab>
            <PageTab $w={201}>Solutions</PageTab>
            <PageTab $w={236}>Translations</PageTab>
            <PageTab $w={224}>Collections</PageTab>
            <PageTab $w={176}>Kumite</PageTab>
            <PageTab $w={161}>Social</PageTab>
            <PageTab $w={208}>Discourse</PageTab>
          </TabsRow>
          <Notice>
            <InfoGlyph size={28} bg="#fff" fg="#4a4b4d" />
            <NoticeText>Next stats refresh in 24 minutes</NoticeText>
          </Notice>
          <StatsBody>
            <StatsIcon>
              <svg width="102" height="91" viewBox="0 0 102 91" fill="none" stroke="#b34b35" strokeWidth="6.400" strokeLinejoin="round">
                <rect x="3.500" y="48" width="15.500" height="39.500" />
                <rect x="37" y="37" width="15.500" height="50.500" />
                <path d="M71 87.500V30H61.500L79.500 5L98 30H87V87.500Z" />
              </svg>
            </StatsIcon>
            <StatsColumn $w={586}>
              <StatsTitle>Progress</StatsTitle>
              <Fact><FactLabel>Rank:</FactLabel>7 kyu</Fact>
              <Fact><FactLabel>Honor:</FactLabel>42</Fact>
              <Fact><FactLabel>Leaderboard Position:</FactLabel>#250,821</Fact>
              <Fact><FactLabel>Honor Percentile:</FactLabel>61st</Fact>
              <Fact><FactLabel>Total Completed Kata:</FactLabel>3</Fact>
            </StatsColumn>
            <StatsColumn $w={586} $top={90}>
              <SubHead $left={11}>
                <svg width="34" height="32" viewBox="0 0 34 32">
                  <rect width="34" height="32" fill="#b34b35" />
                  <path d="M8 8L16 15.500L8 23" fill="none" stroke="#262729" strokeWidth="2" />
                  <rect x="18" y="22" width="8" height="2.500" fill="#262729" />
                </svg>
                <SubHeadText $gap={10}>Languages:</SubHeadText>
              </SubHead>
              <Indented>
                <Fact><FactLabel>Total Languages Trained:</FactLabel>1</Fact>
                <Fact><FactLabel>Highest Trained:</FactLabel>JavaScript (7 kyu)</Fact>
                <Fact><FactLabel>Most Recent:</FactLabel>JavaScript</Fact>
              </Indented>
            </StatsColumn>
            <StatsColumn $w={500} $top={90}>
              <SubHead $left={26}>
                <svg width="22" height="14" viewBox="0 0 22 14" fill="none" stroke="#b34b35" strokeWidth="4">
                  <path d="M2 12L11 3L20 12" />
                </svg>
                <SubHeadText $gap={15}>Up Votes:</SubHeadText>
              </SubHead>
              <Indented>
                <Fact>
                  <svg width="34" height="30" viewBox="-16 0 34 30" fill="none" stroke="#b34b35">
                    <circle cx="9" cy="9" r="7.300" strokeWidth="2.200" />
                    <circle cx="9" cy="9" r="3.500" strokeWidth="2" />
                    <path d="M2 16H16V29L12 25L9 28L6 25L2 29Z" fill="#9d4230" stroke="none" />
                  </svg>
                  <LinkText>Upgrade</LinkText>
                </Fact>
              </Indented>
            </StatsColumn>
          </StatsBody>
        </StatsCard>
      </Column>
    </Main>
  );
}

const FileIcon = () => (
  <svg width="24" height="30" viewBox="0 0 24 30">
    <path d="M1 1H14L23 10V29H1Z" fill="#fdfdfd" stroke="#c4c4c4" />
    <path d="M14 1V10H23Z" fill="#eee" stroke="#bbb" />
    <path d="M12 2V17" stroke="#444" strokeWidth="4" strokeDasharray="2 1.200" />
  </svg>
);
const CaretUp = () => (
  <svg width="18" height="12" viewBox="0 0 18 12" fill="none" stroke="#5f6368" strokeWidth="2.600">
    <path d="M1 11L9 2.500L17 11" />
  </svg>
);

/* ---------- dock icons, each on a 72.75 x 90 cell ---------- */
const Cell = ({ dot, children }) => (
  <DockCell>
    <svg width="72.750" height="90" viewBox="0 0 72.750 90">
      {children}
      {dot && <circle cx="36.400" cy="82" r="4" fill="#05070c" />}
    </svg>
  </DockCell>
);
const Badge = ({ x, y, r, children, w = 0 }) => (
  <g>
    <rect x={x - r - w} y={y - r} width={2 * (r + w)} height={2 * r} rx={r} fill="#e2483d" />
    <text x={x} y={y + 5} textAnchor="middle" fontFamily="Inter" fontSize="14" fill="#fff">{children}</text>
  </g>
);
const ChromeWheel = ({ cx, cy, r, a, b, c, core }) => (
  <g transform={`translate(${cx} ${cy}) scale(${r / 31})`}>
    <circle r="31" fill={b} />
    <path d="M-26.800 -15.500A31 31 0 0 1 26.800 -15.500L0 -15.500L-13 -7Z" fill={a} />
    <path d="M-26.800 -15.500L-13 8L0 0V-15.500Z" fill={a} />
    <path d="M26.800 -15.500A31 31 0 0 1 0 31L13.500 7.500A15.500 15.500 0 0 0 0 -15.500Z" fill={c} />
    <circle r="15" fill="#fff" />
    <circle r="12" fill={core} />
  </g>
);
const WSBox = ({ label, colors, dot }) => (
  <Cell dot={dot}>
    <path d="M6 20L24 10L60 12L68 30L62 58L30 74L12 66L8 44Z" fill={colors[0]} />
    <path d="M38 9L62 16L68 36L50 40L30 20Z" fill={colors[1]} />
    <path d="M10 46L40 58L34 74L14 68Z" fill={colors[2]} />
    <rect x="17" y="23" width="38" height="38" fill="#070707" />
    <text x="19" y="44" fontFamily="Inter" fontWeight="700" fontSize="20" textLength="33" lengthAdjust="spacingAndGlyphs" fill="#fff">{label}</text>
    <rect x="20" y="53" width="14" height="3" fill="#fff" />
  </Cell>
);
const Thumb = ({ bg, bar, light, children }) => (
  <Cell>
    <rect x="4" y="24" width="64" height="36" fill={bg} />
    <rect x="4" y="24" width="64" height="4" fill={bar} />
    {[0, 1, 2, 3, 4, 5].map(i => (
      <rect key={i} x="24" y={32 + i * 4} width={14 + ((i * 7) % 18)} height="1.500" fill={light} />
    ))}
    <rect x="5" y="29" width="14" height="30" fill={light} opacity="0.180" />
    {children}
  </Cell>
);

function Dock() {
  return (
    <DockBar>
      <Cell dot>
        <rect x="9" y="16" width="55" height="52" rx="2" fill="#e9edf3" />
        <path d="M11 16H37Q31 32 32 43H38Q38 56 41 68H11Q9 68 9 66V18Q9 16 11 16Z" fill="#39a0f2" />
        <path d="M23 30V36M49 30V36M20 49Q36 62 53 49" fill="none" stroke="#1a2330" strokeWidth="2.600" strokeLinecap="round" />
        <path d="M37 16Q31 32 32 43H38Q38 56 41 68" fill="none" stroke="#2a3d52" strokeWidth="1.200" />
      </Cell>
      <Cell dot>
        <g transform="rotate(-5 36 43)">
          <rect x="12" y="17" width="50" height="54" fill="#f3f3f3" stroke="#f3f3f3" strokeWidth="3" strokeDasharray="3 2" />
          <rect x="16" y="21" width="42" height="46" fill="#6fa6dc" />
          <path d="M22 22Q30 26 33 36L40 38Q48 44 50 54L42 50L34 56L24 62L29 50Q26 36 22 22Z" fill="#5d4630" />
          <path d="M33 34L42 33L40 42L34 44Z" fill="#efe6d8" />
          <path d="M26 58L32 56L28 64Z" fill="#e8d9b8" />
        </g>
        <circle cx="53" cy="61" r="10" fill="none" stroke="#7384a5" strokeWidth="1.500" />
        <Badge x={51} y={23} r={12} w={6}>1,005</Badge>
      </Cell>
      <Cell dot>
        <circle cx="36" cy="42" r="30.500" fill="#45a3de" />
        <path d="M17 42L52 28L46 57L35 49L30 54L29 46L46 34L26 45Z" fill="#fff" />
        <Badge x={58} y={23} r={12.500}>8</Badge>
      </Cell>
      <Cell dot>
        <rect x="8" y="14" width="57" height="56" rx="3" fill="#dd2a59" />
        <path d="M27 29V42M31.500 29V50M36.500 29V57M41 29V50M46 29V42" stroke="#fff" strokeWidth="2.400" />
        <Badge x={58} y={23} r={12.500}>1</Badge>
      </Cell>
      <Cell>
        <path d="M36 8Q66 8 67 26V44Q66 64 36 65H26L21 77V63Q5 60 4.500 44V26Q6 8 36 8Z" fill="#fff" />
        <path d="M36 12Q61 12 62.500 27V43Q61 59 36 60.500H25L22 65V59Q10 56 9 43V27Q11 12 36 12Z" fill="#7d6fe0" />
        <path d="M22 22Q26 18 29 23Q32 28 29 31Q31 40 39 43Q42 40 46 43Q51 46 47 50Q42 54 36 49Q22 40 20 28Q20 24 22 22Z" fill="#fff" />
        <path d="M36 20Q50 21 50 36M37 26Q45 27 45 35" fill="none" stroke="#fff" strokeWidth="2" />
      </Cell>
      <Cell>
        <rect x="7" y="17" width="59" height="51" rx="2" fill="#c2c5c9" />
        <rect x="8" y="18" width="57" height="49" rx="2" fill="#060606" />
        <rect x="11" y="21" width="51" height="43" fill="#222" />
        <text x="15" y="33" fontFamily="DejaVu Sans Mono" fontSize="15" fill="#fff">&gt;_</text>
      </Cell>
      <Cell dot>
        <rect x="7" y="16" width="59" height="52" rx="2" fill="#21282c" />
        <rect x="7" y="16" width="59" height="6" rx="2" fill="#e8e8e8" />
        <text x="10" y="43" fontFamily="DejaVu Sans Mono" fontWeight="700" fontSize="17" fill="#56d364">$</text>
        <rect x="24" y="28" width="9" height="17" fill="#2f7d32" />
      </Cell>
      <Cell dot><ChromeWheel cx={36} cy={42} r={31} a="#e79a33" b="#f2b23d" c="#f6c04c" core="#f0a93a" /></Cell>
      <Cell dot><ChromeWheel cx={36} cy={42} r={31} a="#d14a3f" b="#42985a" c="#f8cf53" core="#4b87ee" /></Cell>
      <Cell>
        <circle cx="36" cy="42" r="30" fill="#e8ecf0" />
        <circle cx="36" cy="42" r="27" fill="#2f97ea" />
        <circle cx="36" cy="42" r="24.500" fill="none" stroke="#d7ecfb" strokeWidth="3" strokeDasharray="1 2.200" />
        <path d="M53 22L40 45L32 39Z" fill="#e8413a" />
        <path d="M19 62L32 39L40 45Z" fill="#f4f4f4" />
      </Cell>
      <Cell>
        <circle cx="36" cy="43" r="28" fill="#1c63d3" />
        <path d="M42 8Q68 24 66 46Q63 73 36 74Q7 72 6 44Q6 28 14 20Q14 26 18 29Q24 24 30 30Q36 34 28 38Q28 48 36 53Q50 54 52 40Q53 26 42 8Z" fill="#f5752d" />
        <path d="M44 8Q68 24 66 46Q62 66 46 71Q58 56 53 36Q52 20 44 8Z" fill="#fdbf3c" />
        <path d="M10 34Q6 60 26 71Q12 70 7 54Q5 42 10 34Z" fill="#e33a55" />
        <path d="M28 17Q40 14 47 24Q38 20 30 24Z" fill="#2f8df0" />
      </Cell>
      <Cell>
        <path d="M14 18L54 11L62 16L58 66L20 74L12 70Z" fill="#7f5f35" />
        <path d="M12 18L54 12L50 68L14 74Z" fill="#a97f4b" />
        <circle cx="32" cy="43" r="13" fill="#93693a" />
        <circle cx="28" cy="39" r="4.500" fill="#a97f4b" /><circle cx="37" cy="39" r="4.500" fill="#a97f4b" />
        <path d="M20 51Q28 42 33 48Q38 42 44 51Q32 58 20 51Z" fill="#a97f4b" />
        <path d="M59 22L63 23L62 40L58 40Z" fill="#47b36b" /><path d="M58 42L62 42L60 62L57 63Z" fill="#f0a13a" />
      </Cell>
      <Cell dot>
        <circle cx="36" cy="42" r="30" fill="#dfe6e0" />
        <circle cx="36" cy="42" r="27.500" fill="#6fc082" />
        {[10, 70, 130].map(a => (
          <ellipse key={a} cx="36" cy="42" rx="20" ry="7.500" fill="none" stroke="#fff" strokeWidth="1.800" transform={`rotate(${a} 36 42)`} />
        ))}
        <circle cx="36" cy="42" r="3" fill="#fff" />
      </Cell>
      <Cell dot>
        <rect x="7" y="13" width="58" height="56" rx="3" fill="#45494b" />
        <SiSublimetext x="17" y="21" size={40} color="#f79a2c" />
      </Cell>
      <Cell dot>
        <path d="M10 19L46 12V68L12 74Z" fill="#24292f" />
        <path d="M48 13L62 20V64L48 70Z" fill="#2a7fc9" />
        <path d="M46 24L18 49L14 45L44 19ZM16 32L19 30L45 55L43 61Z" fill="#3493dc" />
      </Cell>
      <WSBox dot label="WS" colors={['#3aaad6', '#e5ee54', '#36c7d0']} />
      <WSBox label="PC" colors={['#48d18a', '#e7f255', '#f5f45a']} />
      <Cell>
        <circle cx="36" cy="42" r="30" fill="#eceae8" />
        {['#f29a2e', '#e9cf3c', '#a9cf4a', '#55b68b', '#5f9fd6', '#8f74c2', '#cb6ea8', '#e5533f'].map((c, i) => (
          <ellipse key={c} cx="36" cy="28" rx="7.500" ry="12" fill={c} opacity="0.850" transform={`rotate(${i * 45} 36 42)`} />
        ))}
      </Cell>
      <Cell dot>
        <circle cx="36" cy="42" r="29" fill="#fbfbfc" stroke="#d94fb4" strokeWidth="2.500" />
        <path d="M29 54V27L50 23V49" fill="none" stroke="#e0457f" strokeWidth="4" />
        <ellipse cx="25" cy="55" rx="6" ry="5" fill="#4a86ee" /><ellipse cx="46" cy="50" rx="6" ry="5" fill="#8a5ce0" />
      </Cell>
      <Cell>
        <circle cx="36" cy="42" r="30" fill="#e9f1f8" />
        <circle cx="36" cy="42" r="27.500" fill="#258bf3" />
        <path d="M40 23L23 60M32 23L50 60M16 52H40M47 52H56" stroke="#fff" strokeWidth="5" strokeLinecap="round" />
        <Badge x={58} y={23} r={12.500}>6</Badge>
      </Cell>
      <Cell>
        <circle cx="36" cy="42" r="30" fill="#d7dde1" />
        <circle cx="36" cy="42" r="27.500" fill="#9aa3a8" />
        <FaRocket x="19" y="25" size={34} color="#43494e" />
      </Cell>
      <Cell>
        <rect x="7" y="14" width="59" height="56" rx="2" fill="#a9b3b8" />
        <circle cx="36" cy="42" r="22" fill="none" stroke="#2b2d2f" strokeWidth="5" />
        <circle cx="36" cy="42" r="17" fill="#7c7f82" stroke="#3a3c3e" strokeWidth="3" />
        <circle cx="36" cy="42" r="25" fill="none" stroke="#2b2d2f" strokeWidth="2.500" strokeDasharray="3 2.500" />
        <path d="M36 42L52 42M36 42L28 28M36 42L28 56" stroke="#222" strokeWidth="3" />
        <circle cx="36" cy="42" r="4" fill="#c3c6c8" />
      </Cell>
      <Cell>
        <path d="M36 11L60 62L66 73H6L12 62Z" fill="#2d2c2c" />
        <path d="M25 40H47L58 72H14Z" fill="#f2a540" />
        <path d="M25 40H47L52 56Q46 52 42 58Q36 50 31 58Q26 52 20 55Z" fill="#fdebd2" />
        <path d="M28 60V72M44 60V72" stroke="#fbc35e" strokeWidth="5" />
      </Cell>
      <Cell dot>
        <circle cx="36" cy="42" r="30" fill="#62d16c" />
        <path d="M17 32Q37 25 56 36M20 44Q36 38 52 47M22 54Q36 50 48 57" fill="none" stroke="#101312" strokeWidth="5" strokeLinecap="round" />
      </Cell>
      <Cell>
        <path d="M9 17L54 11L62 66L18 73Z" fill="#f7f6f1" />
        <path d="M9 17L54 11L56 20L11 27Z" fill="#f7cf3f" />
        <path d="M12 33L57 27M13 39L58 33M14 45L59 39M15 51L60 45M16 57L61 51M17 63L61 57" stroke="#d6d5cf" strokeWidth="1.400" />
      </Cell>
      <Cell>
        <path d="M10 70L60 62L64 64L60 68L16 74Z" fill="#4a5157" />
        <path d="M8 20L52 13L62 62L15 70Z" fill="#f4f4f2" />
        <path d="M8 20L52 13L55 26L10 32Z" fill="#d94b3f" />
        <text x="33" y="27" textAnchor="middle" fontFamily="Inter" fontSize="11" transform="rotate(-7 33 23)" fill="#fff">DEC</text>
        <text x="36" y="58" textAnchor="middle" fontFamily="Inter" fontSize="25" transform="rotate(-5 36 50)" fill="#2a2a2a">17</text>
      </Cell>
      <DockRule $h={42} $top={24} />
      <Cell dot>
        <rect x="6" y="16" width="60" height="52" rx="2" fill="#8d9598" />
        <rect x="8" y="18" width="56" height="48" fill="#17201f" />
        <path d="M8 30H64M8 42H64M8 54H64M20 18V66M32 18V66M44 18V66M56 18V66" stroke="#35504b" />
        <path d="M9 46H18L21 42L24 47L28 45L31 20L35 60L38 44L42 49L46 44L50 48L54 40L57 46H63" fill="none" stroke="#8fe0c4" strokeWidth="1.700" />
      </Cell>
      <Cell dot>
        <circle cx="36" cy="42" r="30" fill="#e6f3f7" />
        <circle cx="36" cy="42" r="27.500" fill="#3bb0cf" />
        <text x="16" y="50" fontFamily="Inter" fontWeight="800" fontSize="22" textLength="21" lengthAdjust="spacingAndGlyphs" fill="#fff">M</text>
        <path d="M47 34V46M41.500 43L47 50L52.500 43" fill="none" stroke="#fff" strokeWidth="4.500" />
      </Cell>
      <Cell dot>
        <rect x="14" y="16" width="48" height="44" fill="#c9a978" />
        <path d="M5 24L55 17L60 62L10 70Z" fill="#f4f4f4" />
        <path d="M8 27L53 21L57 59L13 66Z" fill="#7fb2e4" />
        <path d="M10 46L55 40L57 59L13 66Z" fill="#3a6ea5" />
        <path d="M12 60L38 50L57 55V59L13 66Z" fill="#dfe3dd" />
        <circle cx="53" cy="60" r="13" fill="#5c5650" /><circle cx="53" cy="57" r="8" fill="#bfc3c9" />
      </Cell>
      <Cell>
        <rect x="2" y="8" width="68" height="68" rx="9" fill="#116cf6" />
        <text x="5" y="42" fontFamily="Inter" fontSize="23" textLength="62" lengthAdjust="spacingAndGlyphs" fill="#fff">VPN+</text>
        <text x="9" y="62" fontFamily="Inter" fontSize="11" textLength="54" lengthAdjust="spacingAndGlyphs" fill="#fff">freevpn.pw</text>
      </Cell>
      <DockRule $h={66} $top={12} />
      <Cell>
        <rect x="9" y="18" width="51" height="50" rx="2" fill="#7cc0ea" />
        <path d="M13 15H40L56 29V72H13Z" fill="#fbfbfb" />
        <path d="M40 15V29H56Z" fill="#d8d8d8" />
      </Cell>
      <Thumb bg="#1a1b1d" bar="#2a2b2d" light="#8a8278">
        <circle cx="56" cy="62" r="12" fill="#62d16c" />
        <path d="M49 58Q57 55 63 60M50 63Q57 60 62 65M51 67Q57 65 61 69" fill="none" stroke="#101312" strokeWidth="2" />
      </Thumb>
      <Thumb bg="#252b3c" bar="#1b2033" light="#3d5070">
        <path d="M46 54L60 50V70L47 74Z" fill="#24292f" />
        <path d="M61 52L67 55V70L61 72Z" fill="#2a7fc9" /><path d="M49 60L61 70M49 67L61 56" stroke="#3493dc" strokeWidth="2.500" />
      </Thumb>
      <Thumb bg="#2b2c2e" bar="#e9eaed" light="#6a6b6d">
        <ChromeWheel cx={56} cy={62} r={12} a="#d14a3f" b="#42985a" c="#f8cf53" core="#4b87ee" />
      </Thumb>
      <Thumb bg="#232840" bar="#4c5d8e" light="#3f4866">
        <path d="M43 52L66 50L68 70L46 75Z" fill="#35b8d6" />
        <rect x="47" y="55" width="16" height="15" fill="#070707" />
        <text x="49" y="64" fontFamily="Inter" fontWeight="700" fontSize="8" fill="#fff">WS</text>
      </Thumb>
      <Thumb bg="#f2f2f2" bar="#2d2d2d" light="#cfcfc6">
        <ChromeWheel cx={56} cy={62} r={12} a="#e79a33" b="#f2b23d" c="#f6c04c" core="#f0a93a" />
      </Thumb>
      <Cell>
        <path d="M12 18L17 70Q18 73 24 74H48Q54 73 55 70L60 18Z" fill="#cfd3d9" opacity="0.920" />
        <path d="M24 22L27 72H34L33 22Z" fill="#e8eaee" opacity="0.700" />
        <ellipse cx="36" cy="18" rx="24" ry="5" fill="#a9aeb8" stroke="#e6e8ec" strokeWidth="2" />
      </Cell>
    </DockBar>
  );
}

export default function App() {
  return (
    <Desktop>
      <Global />
      <LeftScene />
      <BackWindow>
        <BackTitle><BackDot /><BackButton>
          <svg width="26" height="24" viewBox="0 0 26 24" fill="none" stroke="#a0a0a0" strokeWidth="2">
            <rect x="1" y="1" width="24" height="22" /><path d="M5 6H9M5 10H9M5 14H9" />
          </svg>
        </BackButton></BackTitle>
        <BackPane />
      </BackWindow>
      <DesktopLabel $x={2820} $y={461}>PM</DesktopLabel>
      <DesktopLabel $x={2815} $y={654}>ode</DesktopLabel>
      <FolderStub />
      <SelectedLabel>AM</SelectedLabel>
      <WindowShadow />
      <MenuBar>
        <AppleMark><FaApple size={32} /></AppleMark>
        <MenuList>
          <MenuItem $bold>Chrome</MenuItem>
          {['File', 'Edit', 'View', 'History', 'Bookmarks', 'People', 'Window', 'Help'].map(m => (
            <MenuItem key={m}>{m}</MenuItem>
          ))}
        </MenuList>
        <MenuTray />
      </MenuBar>
      <Window>
        <TabStrip>
          <Lights>
            <Light $c="#ee6a5f" $b="#d5564b" />
            <Light $c="#f5bf4f" $b="#dba33c" />
            <Light $c="#62c655" $b="#4dab40" />
          </Lights>
          {tabs.map(([icon, label, w, rule], i) => (
            <Tab key={i} $w={w} $active={label === null}>
              {icons[icon]}
              {label === null
                ? <CloseMark><Cross size={18} w={3} color="#4a4d51" /></CloseMark>
                : <TabLabel>{label}</TabLabel>}
              {rule && <TabRule />}
            </Tab>
          ))}
          <NewTab>
            <svg width="25" height="25" viewBox="0 0 25 25" stroke="#5f6368" strokeWidth="3.200">
              <path d="M12.500 0V25M0 12.500H25" />
            </svg>
          </NewTab>
        </TabStrip>
        <BrowserToolbar />
        <Page>
          <Sidebar />
          <Content />
          <ScrollTrack><ScrollThumb /></ScrollTrack>
          <ToastGlow />
          <Toast>
            <ToastHead>
              <ToastBadge><InfoGlyph size={52} bg="#efefef" fg="#4a69c9" /></ToastBadge>
              <ToastTitle>You have ranked up!</ToastTitle>
              <ToastClose><Cross size={21} w={5.5} color="#fff" /></ToastClose>
            </ToastHead>
            <ToastBody>Powerful you are. You have ranked up to 7 kyu in JavaScript.</ToastBody>
          </Toast>
        </Page>
        <Downloads>
          <Download $w={461} $pl={44}><FileIcon /><FileName>frontend-nanod....zip</FileName><CaretUp /></Download>
          <Download $w={454} $pl={37}><FileIcon /><FileName>a-tiny-JS-world....zip</FileName><CaretUp /></Download>
          <ShowAll>Show All</ShowAll>
          <ShelfClose><Cross size={20} w={3} color="#6b6e72" /></ShelfClose>
        </Downloads>
      </Window>
      <Dock />
    </Desktop>
  );
}
